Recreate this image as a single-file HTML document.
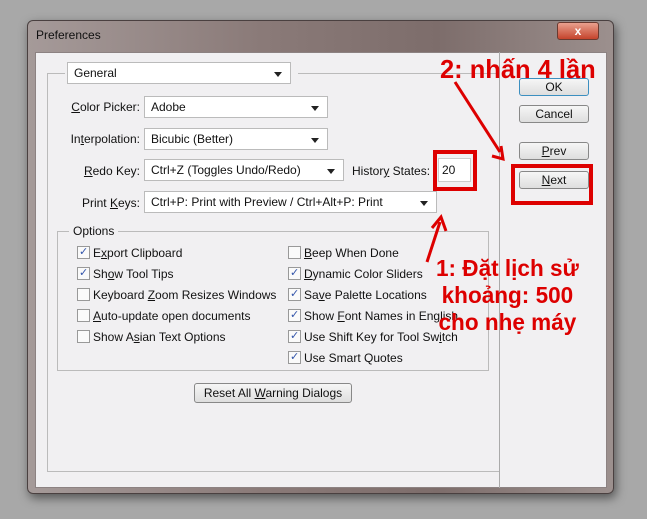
<!DOCTYPE html>
<html><head><meta charset="utf-8"><style>
*{margin:0;padding:0;box-sizing:border-box}
body{width:647px;height:519px;background:#a8a8a8;position:relative;overflow:hidden;font-family:"Liberation Sans",sans-serif;font-size:12px;color:#111}
.a{position:absolute}
.win{left:27px;top:20px;width:587px;height:474px;border-radius:6px;background:linear-gradient(90deg,#a59a99,#8a7a78 40%,#7d6d6b 70%,#9c908e);box-shadow:2px 4px 10px rgba(0,0,0,.5);border:1px solid #4a4040}
.client{left:35px;top:52px;width:572px;height:436px;background:#f1f0f2;border:1px solid #8c8282}
.dd{background:#fff;border:1px solid #bbb;height:22px;padding:3px 6px;white-space:nowrap}
.dd:after{content:"";position:absolute;right:8px;top:9px;border-left:4px solid transparent;border-right:4px solid transparent;border-top:5px solid #222}
.lbl{text-align:right;white-space:nowrap}
.btn{border:1px solid #888;border-radius:3px;background:linear-gradient(#f6f6f6,#dedede);text-align:center;height:18px;line-height:16px}
.cb{width:13px;height:13px;border:1px solid #999;background:#fafafa;display:inline-block;vertical-align:-2px;margin-right:3px;position:relative}
.cb.c:after{content:"✓";position:absolute;left:1px;top:-2px;font-size:11px;color:#35a;font-family:"DejaVu Sans",sans-serif}
.row{white-space:nowrap;height:21px}
.red{color:#d00;font-family:"Liberation Sans",sans-serif;font-weight:bold;white-space:nowrap;transform-origin:0 0}
.box{border:4px solid #d00}
u{text-decoration:underline}
</style></head><body>
<div class="a win"></div>
<div class="a" style="left:36px;top:28px;font-size:12px;color:#111">Preferences</div>
<div class="a" style="left:557px;top:22px;width:42px;height:18px;border-radius:3px;background:linear-gradient(#e9a08e,#c5442c);border:1px solid #6a3a30;color:#fff;text-align:center;font-weight:bold;font-size:12px;line-height:16px">x</div>
<div class="a client"></div>
<div class="a" style="left:47px;top:73px;width:453px;height:399px;border:1px solid #bbb;border-top:none"></div>
<div class="a" style="left:47px;top:73px;width:18px;border-top:1px solid #bbb"></div>
<div class="a" style="left:298px;top:73px;width:202px;border-top:1px solid #bbb"></div>
<div class="a" style="left:499px;top:52px;width:1px;height:436px;background:#aaa"></div>
<div class="a dd" style="left:67px;top:62px;width:224px">General</div>
<div class="a lbl" style="left:40px;top:100px;width:100px"><u>C</u>olor Picker:</div>
<div class="a dd" style="left:144px;top:96px;width:184px">Adobe</div>
<div class="a lbl" style="left:40px;top:132px;width:100px">In<u>t</u>erpolation:</div>
<div class="a dd" style="left:144px;top:128px;width:184px">Bicubic (Better)</div>
<div class="a lbl" style="left:40px;top:164px;width:100px"><u>R</u>edo Key:</div>
<div class="a dd" style="left:144px;top:159px;width:200px">Ctrl+Z (Toggles Undo/Redo)</div>
<div class="a" style="left:352px;top:164px;white-space:nowrap">Histor<u>y</u> States:</div>
<div class="a" style="left:438px;top:158px;width:33px;height:24px;background:#fff;border:1px solid #ccc;padding:4px 3px">20</div>
<div class="a box" style="left:433px;top:150px;width:44px;height:41px"></div>
<div class="a lbl" style="left:40px;top:196px;width:100px">Print <u>K</u>eys:</div>
<div class="a dd" style="left:144px;top:191px;width:293px">Ctrl+P: Print with Preview / Ctrl+Alt+P: Print</div>
<div class="a" style="left:57px;top:231px;width:432px;height:140px;border:1px solid #bbb"></div>
<div class="a" style="left:69px;top:224px;background:#f1f0f2;padding:0 4px">Options</div>
<div class="a" style="left:77px;top:246px">
<div class="row"><span class="cb c"></span>E<u>x</u>port Clipboard</div>
<div class="row"><span class="cb c"></span>Sh<u>o</u>w Tool Tips</div>
<div class="row"><span class="cb"></span>Keyboard <u>Z</u>oom Resizes Windows</div>
<div class="row"><span class="cb"></span><u>A</u>uto-update open documents</div>
<div class="row"><span class="cb"></span>Show A<u>s</u>ian Text Options</div>
</div>
<div class="a" style="left:288px;top:246px">
<div class="row"><span class="cb"></span><u>B</u>eep When Done</div>
<div class="row"><span class="cb c"></span><u>D</u>ynamic Color Sliders</div>
<div class="row"><span class="cb c"></span>Sa<u>v</u>e Palette Locations</div>
<div class="row"><span class="cb c"></span>Show <u>F</u>ont Names in English</div>
<div class="row"><span class="cb c"></span>Use Shift Key for Tool Sw<u>i</u>tch</div>
<div class="row"><span class="cb c"></span>Use Smart Quotes</div>
</div>
<div class="a btn" style="left:194px;top:383px;width:158px;height:20px;line-height:18px">Reset All <u>W</u>arning Dialogs</div>
<div class="a btn" style="left:519px;top:78px;width:70px;border-color:#3c8fc0">OK</div>
<div class="a btn" style="left:519px;top:105px;width:70px">Cancel</div>
<div class="a btn" style="left:519px;top:142px;width:70px"><u>P</u>rev</div>
<div class="a btn" style="left:519px;top:171px;width:70px"><u>N</u>ext</div>
<div class="a box" style="left:511px;top:164px;width:82px;height:41px"></div>
<svg class="a" style="left:0;top:0" width="647" height="519">
<g stroke="#d00" stroke-width="3" fill="none">
<line x1="455" y1="82" x2="500" y2="152"/>
<polyline points="492,156 503,159 501,146"/>
<line x1="427" y1="262" x2="440" y2="222"/>
<polyline points="432,228 441,217 446,231"/>
</g></svg>
<div class="a red" style="left:440px;top:54px;font-size:26px;transform:scaleX(0.98)">2: nhấn 4 lần</div>
<div class="a red" style="left:436px;top:255px;font-size:23px;line-height:27px;text-align:center;transform:scaleX(0.98)">1: Đặt lịch sử<br>khoảng: 500<br>cho nhẹ máy</div>
</body></html>
